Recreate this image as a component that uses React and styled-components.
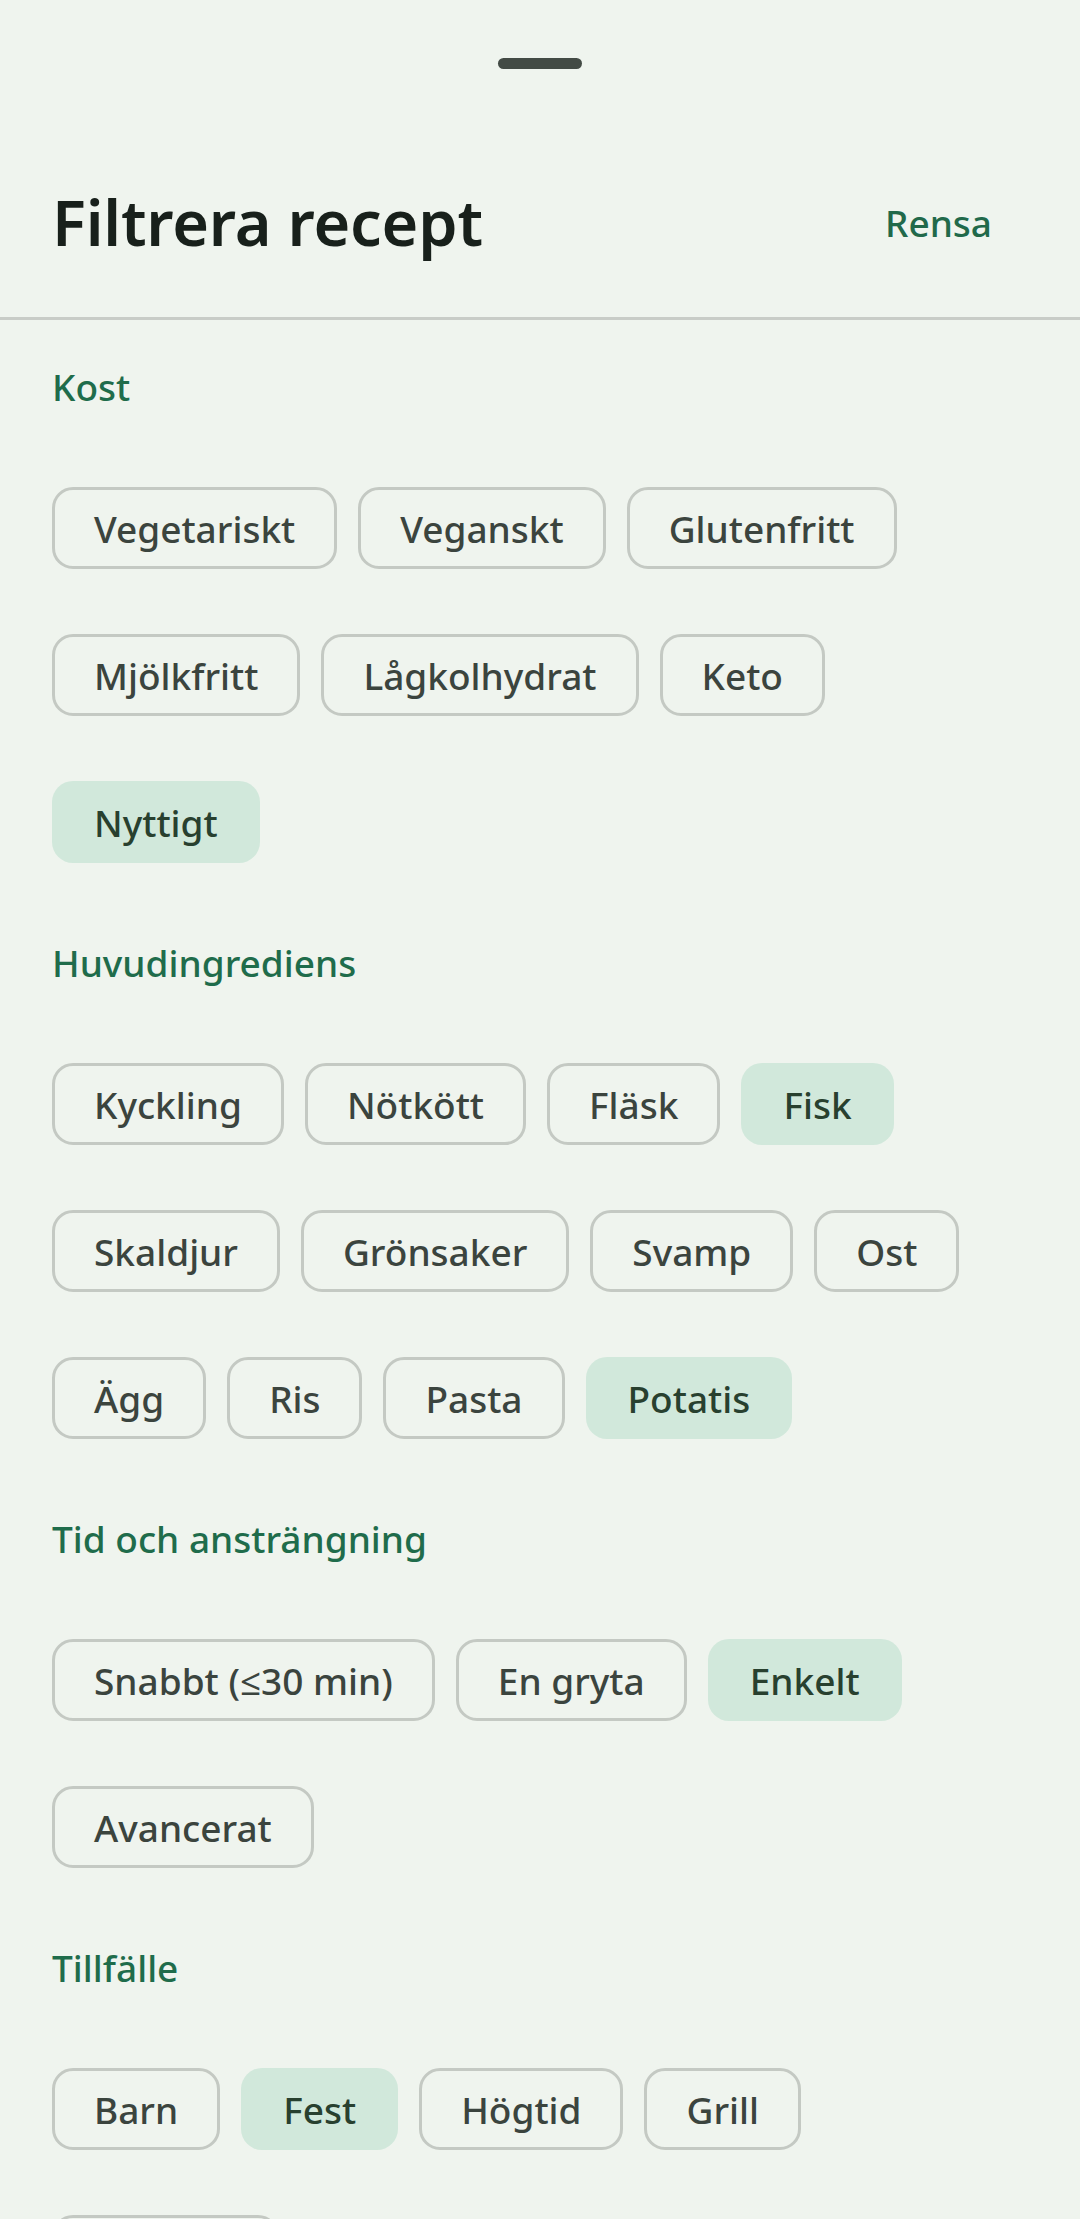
import React from 'react';
import styled, { createGlobalStyle } from 'styled-components';

const GlobalStyle = createGlobalStyle`
  html, body {
    margin: 0;
    padding: 0;
    background: #eff4ee;
  }
  body {
    font-family: "Noto Sans", "Open Sans", sans-serif;
    -webkit-font-smoothing: antialiased;
  }
`;

const Sheet = styled.div`
  min-height: 2219px;
  background: #eff4ee;
  padding-top: 58px;
  box-sizing: border-box;
`;

const DragHandle = styled.div`
  width: 84px;
  height: 11px;
  border-radius: 6px;
  background: #434b45;
  margin: 0 auto 89px;
`;

const Header = styled.div`
  display: flex;
  align-items: center;
  justify-content: space-between;
  height: 128px;
  padding: 0 52px;
`;

const Title = styled.h1`
  margin: 0;
  font-size: 63px;
  line-height: 80px;
  font-weight: 600;
  color: #18201b;
  letter-spacing: -0.2px;
`;

const ClearButton = styled.button`
  border: none;
  background: none;
  padding: 0 36px;
  height: 105px;
  font-family: inherit;
  font-size: 37px;
  font-weight: 500;
  color: #21694a;
  cursor: pointer;
`;

const Divider = styled.hr`
  margin: 31px 0 0;
  border: none;
  height: 3px;
  background: #c8ccc7;
`;

const Sections = styled.div`
  display: flex;
  flex-direction: column;
  gap: 54px;
  padding: 42px 52px 0;
`;

const Section = styled.section`
  display: flex;
  flex-direction: column;
`;

const SectionLabel = styled.h2`
  margin: 0;
  font-size: 37px;
  line-height: 50px;
  font-weight: 500;
  color: #1f6c4b;
`;

const ChipGroup = styled.div`
  display: flex;
  flex-wrap: wrap;
  gap: 65px 21px;
  margin-top: 54px;
  padding: 21px 0;
`;

const Chip = styled.button`
  box-sizing: border-box;
  height: 82px;
  padding: 0 ${p => (p.$selected ? 42 : 39)}px;
  border-radius: 21px;
  border: ${p => (p.$selected ? 'none' : '3px solid #c4c9c3')};
  background: ${p => (p.$selected ? '#d1e8db' : 'transparent')};
  color: ${p => (p.$selected ? '#28402f' : '#3b443e')};
  font-family: inherit;
  font-size: 37px;
  font-weight: 500;
  line-height: 1;
  white-space: nowrap;
  cursor: pointer;
`;

const filters = [
  {
    title: 'Kost',
    options: ['Vegetariskt', 'Veganskt', 'Glutenfritt', 'Mjölkfritt', 'Lågkolhydrat', 'Keto', 'Nyttigt'],
    selected: ['Nyttigt'],
  },
  {
    title: 'Huvudingrediens',
    options: ['Kyckling', 'Nötkött', 'Fläsk', 'Fisk', 'Skaldjur', 'Grönsaker', 'Svamp', 'Ost', 'Ägg', 'Ris', 'Pasta', 'Potatis'],
    selected: ['Fisk', 'Potatis'],
  },
  {
    title: 'Tid och ansträngning',
    options: ['Snabbt (≤30 min)', 'En gryta', 'Enkelt', 'Avancerat'],
    selected: ['Enkelt'],
  },
  {
    title: 'Tillfälle',
    options: ['Barn', 'Fest', 'Högtid', 'Grill', 'Picknick'],
    selected: ['Fest'],
  },
];

export default function App() {
  return (
    <>
      <GlobalStyle />
      <Sheet>
        <DragHandle />
        <Header>
          <Title>Filtrera recept</Title>
          <ClearButton>Rensa</ClearButton>
        </Header>
        <Divider />
        <Sections>
          {filters.map(group => (
            <Section key={group.title}>
              <SectionLabel>{group.title}</SectionLabel>
              <ChipGroup>
                {group.options.map(opt => (
                  <Chip key={opt} $selected={group.selected.includes(opt)}>
                    {opt}
                  </Chip>
                ))}
              </ChipGroup>
            </Section>
          ))}
        </Sections>
      </Sheet>
    </>
  );
}
